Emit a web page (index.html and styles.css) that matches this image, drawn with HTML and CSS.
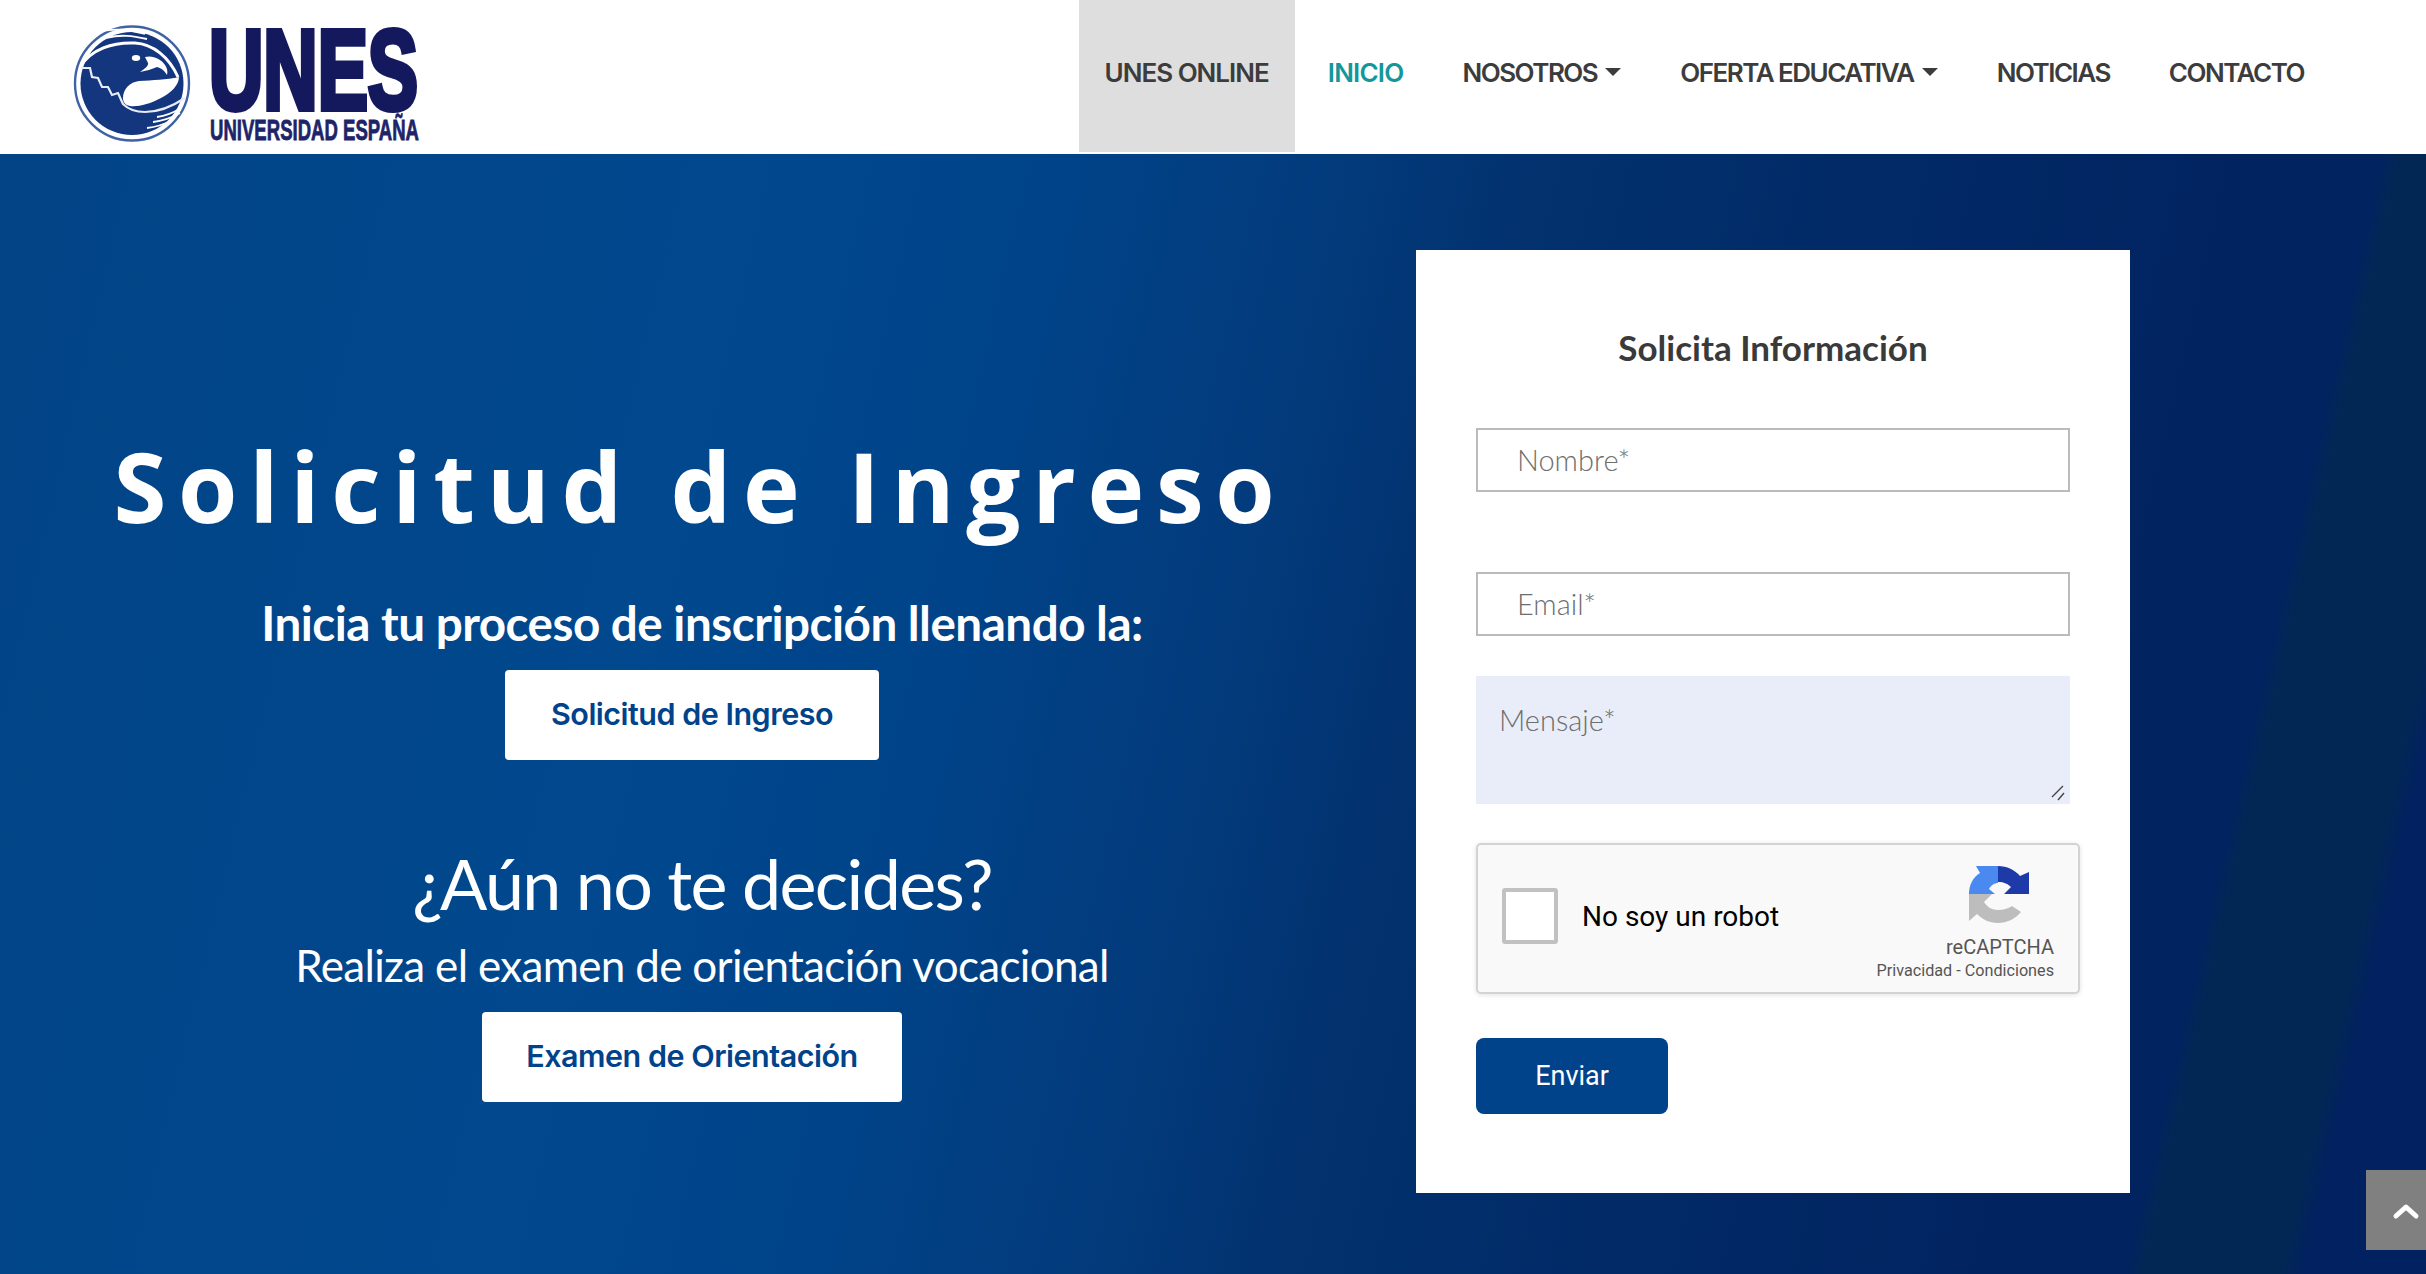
FILE: index.html
```html
<!DOCTYPE html>
<html lang="es">
<head>
<meta charset="utf-8">
<title>Solicitud de Ingreso - UNES</title>
<link rel="stylesheet" href="styles.css">
</head>
<body>
<header class="topbar">
  <a class="logo" href="#">
    <svg class="logo-mark" viewBox="0 0 118 118" width="118" height="118" aria-hidden="true">
      <circle cx="59" cy="58.5" r="57" fill="#fff" stroke="#3f62a6" stroke-width="2.4"/>
      <circle cx="59" cy="58.5" r="51.5" fill="#14367f"/>
      <path d="M7 42C18 24 40 17 62 18C80 19 96 32 105 52" fill="none" stroke="#fff" stroke-width="3"/>
      <path d="M24 8C40 2 56 5 72 9M34 13C48 9 60 11 74 14" fill="none" stroke="#fff" stroke-width="1.8"/>
      <path d="M72 32C80 30 88 34 92 40C94 43 95 46 94 50C91 45 88 43 84 42C79 44 73 46 67 47C72 44 76 40 75 38C74 36 73 34 72 32Z" fill="#fff"/>
      <ellipse cx="63" cy="33" rx="4.2" ry="3" fill="#fff"/>
      <path d="M50 73C50 64 57 57 66 56C80 55 93 55 106 52C106 60 98 68 88 73C77 79 65 82 57 81C52 80 50 77 50 73Z" fill="#fff"/>
      <path d="M8 43L17 43L19 52L25 53L29 62L35 62L39 70L45 68L50 79C56 85 62 87 72 87C86 87 100 81 112 73" fill="none" stroke="#e7ecf6" stroke-width="2.2"/>
      <path d="M80 97C90 96 98 93 107 88M84 92C92 91 100 88 108 83M74 103C84 102 92 99 100 95" fill="none" stroke="#fff" stroke-width="1.8"/>
    </svg>
    <svg class="logo-type" viewBox="0 0 212 118" width="212" height="118" role="img" aria-label="UNES Universidad España">
      <text class="logo-big" x="1" y="84" textLength="209" lengthAdjust="spacingAndGlyphs">UNES</text>
      <text class="logo-small" x="2" y="115" textLength="209" lengthAdjust="spacingAndGlyphs">UNIVERSIDAD ESPAÑA</text>
    </svg>
  </a>
  <nav class="nav">
    <a class="nav-item nav-online" href="#">UNES ONLINE</a>
    <a class="nav-item nav-active" href="#">INICIO</a>
    <a class="nav-item" href="#">NOSOTROS<span class="caret"></span></a>
    <a class="nav-item" href="#">OFERTA EDUCATIVA<span class="caret"></span></a>
    <a class="nav-item" href="#">NOTICIAS</a>
    <a class="nav-item" href="#">CONTACTO</a>
  </nav>
</header>

<main class="hero">
  <section class="intro">
    <h1 class="intro-title">Solicitud de Ingreso</h1>
    <p class="intro-lead">Inicia tu proceso de inscripción llenando la:</p>
    <a class="cta cta-first" href="#">Solicitud de Ingreso</a>
    <h2 class="intro-question">¿Aún no te decides?</h2>
    <p class="intro-sub">Realiza el examen de orientación vocacional</p>
    <a class="cta cta-second" href="#">Examen de Orientación</a>
  </section>

  <form class="card">
    <h3 class="card-title">Solicita Información</h3>
    <input class="field field-name" type="text" placeholder="Nombre*">
    <input class="field field-mail" type="text" placeholder="Email*">
    <div class="message-wrap">
      <textarea class="message" placeholder="Mensaje*"></textarea>
      <svg class="grip" viewBox="0 0 14 16" width="14" height="16" aria-hidden="true"><path d="M1 12L12 1M7 15L13 8" fill="none" stroke="#444" stroke-width="1.4"/></svg>
    </div>
    <div class="captcha">
      <span class="captcha-box"></span>
      <span class="captcha-label">No soy un robot</span>
      <div class="captcha-brand">
        <svg class="captcha-icon" viewBox="0 0 60 60" width="60" height="60" aria-hidden="true">
          <path d="M29 29H0C0 20 4 12 11 8L7 1H29V18C26 18 22 20 20 24L26 29Z" fill="#4a8af0"/>
          <path d="M29 1C38 1 46 5 51 11L60 7V29H35L42 22C39 19 35 17 29 17Z" fill="#1e3aa8"/>
          <path d="M0 29H23L15 37C18 42 23 45 29 45C35 45 40 43 43 41L52 47C46 54 38 58 29 58C20 58 13 54 8 49L0 56Z" fill="#bdbdbd"/>
        </svg>
        <span class="captcha-name">reCAPTCHA</span>
        <span class="captcha-links">Privacidad - Condiciones</span>
      </div>
    </div>
    <button class="send" type="button">Enviar</button>
  </form>
</main>

<a class="to-top" href="#" aria-label="Subir">
  <svg viewBox="0 0 28 18" width="28" height="18" aria-hidden="true"><path d="M4 14L14 5L24 14" fill="none" stroke="#fff" stroke-width="5" stroke-linejoin="round" stroke-linecap="round"/></svg>
</a>
</body>
</html>
```

FILE: styles.css
```css
* { box-sizing: border-box; }
html, body { margin: 0; padding: 0; height: 100%; overflow: hidden; }
body { font-family: "Lato", "Liberation Sans", sans-serif; background: #fff; display: flex; flex-direction: column; }
a { text-decoration: none; }

.topbar { flex: 0 0 154px; display: flex; justify-content: space-between; padding-left: 73px; padding-right: 96px; background: #fff; }
.logo { display: flex; gap: 17px; padding-top: 25px; height: 152px; }
.logo-type { overflow: visible; }
.logo-big { font-family: "Liberation Sans", sans-serif; font-weight: 700; font-size: 113px; fill: #14185c; stroke: #14185c; stroke-width: 6px; }
.logo-small { font-family: "Liberation Sans", sans-serif; font-weight: 700; font-size: 29px; fill: #1d2468; stroke: #1d2468; stroke-width: .8px; }

.nav { display: flex; height: 152px; }
.nav-item { display: flex; align-items: center; padding: 0 26px 8px; margin-left: 7px; font-family: "Inter", sans-serif; font-weight: 600; font-size: 26px; letter-spacing: -1.5px; color: #3c3c3c; white-space: nowrap; }
.nav-online { background: #dedede; margin-left: 0; letter-spacing: -1px; }
.nav-active { color: #14969a; letter-spacing: -.8px; }
.caret { display: inline-block; margin-left: 8px; width: 0; height: 0; border-left: 8px solid transparent; border-right: 8px solid transparent; border-top: 8px solid #3c3c3c; }

.hero { flex: 1; display: flex; min-height: 0; padding: 96px 0 0 0; color: #fff;
  background: linear-gradient(103deg, #024486 0%, #01488e 28%, #00448a 38%, #033b7c 50%, #02326f 57%, #012a66 70%, #012461 84%, #012360 88.8%, #032755 89.4%, #032755 94.6%, #012160 95.4%, #012160 100%); }

.intro { width: 1404px; flex: none; display: flex; flex-direction: column; align-items: center; padding-top: 178px; text-align: center; }
.intro-title { margin: 0 4px 0 0; font-family: "Open Sans", sans-serif; font-weight: 700; font-size: 96px; line-height: 116px; letter-spacing: 11.7px; white-space: nowrap; }
.intro-lead { margin: 49px 0 0; font-weight: 700; font-size: 47.6px; line-height: 60px; letter-spacing: -.5px; }
.cta { display: flex; align-items: center; justify-content: center; height: 90px; margin-right: 20px; padding-bottom: 3px; background: #fff; border-radius: 4px; color: #00438a; font-family: "Inter", sans-serif; font-weight: 600; font-size: 30.5px; letter-spacing: -.5px; }
.cta-first { width: 374px; margin-top: 17px; }
.cta-second { width: 420px; margin-top: 19px; }
.intro-question { margin: 79px 0 0; font-weight: 400; font-size: 70px; line-height: 88px; letter-spacing: -1.7px; }
.intro-sub { margin: 10px 0 0; font-size: 44px; line-height: 56px; letter-spacing: -.67px; }

.card { width: 714px; height: 943px; margin-left: 12px; padding: 0 60px; background: #fff; color: #333; display: flex; flex-direction: column; align-items: flex-start; }
.card-title { width: 100%; margin: 72px 0 0; font-weight: 700; font-size: 35px; line-height: 50px; text-align: center; color: #3a3a3a; }
.field { display: block; width: 594px; height: 64px; margin: 0; padding: 0 39px 2px; border: 2px solid #bbb; border-radius: 0; background: #fff; font-family: "Lato", sans-serif; font-weight: 300; font-size: 29px; color: #666; outline: none; }
.field::placeholder, .message::placeholder { color: #6e6e6e; opacity: 1; }
.field-name { margin-top: 56px; }
.field-mail { margin-top: 80px; }
.message-wrap { position: relative; width: 594px; height: 128px; margin-top: 40px; }
.message { display: block; width: 100%; height: 100%; padding: 26px 23px; border: 0; border-radius: 0; background: #e9edf9; font-family: "Lato", sans-serif; font-weight: 300; font-size: 29px; outline: none; resize: none; }
.grip { position: absolute; right: 5px; bottom: 3px; }

.captcha { display: flex; align-items: center; width: 604px; height: 151px; margin-top: 39px; padding: 0 24px; background: #f9f9f9; border: 2px solid #d3d3d3; border-radius: 5px; box-shadow: 0 1px 5px rgba(0,0,0,.12); }
.captcha-box { width: 56px; height: 56px; margin-bottom: 5px; background: #fff; border: 4px solid #c1c1c1; border-radius: 3px; flex: none; }
.captcha-label { margin-left: 24px; margin-bottom: 4px; font-family: "Roboto", sans-serif; font-size: 28px; color: #000; }
.captcha-brand { margin-left: auto; display: flex; flex-direction: column; align-items: flex-end; padding-top: 10px; }
.captcha-icon { margin-right: 25px; }
.captcha-name { margin-top: 9px; font-family: "Roboto", sans-serif; font-size: 20px; line-height: 26px; color: #555; }
.captcha-links { font-family: "Roboto", sans-serif; font-size: 16.2px; line-height: 22px; color: #555; white-space: nowrap; }

.send { width: 192px; height: 76px; margin-top: 44px; border: 0; border-radius: 8px; background: #00438a; color: #fff; font-family: "Roboto", sans-serif; font-size: 27px; }

.to-top { position: fixed; right: 0; bottom: 24px; width: 60px; height: 80px; background: #808080; display: flex; align-items: center; padding-left: 26px; padding-top: 2px; }
```
